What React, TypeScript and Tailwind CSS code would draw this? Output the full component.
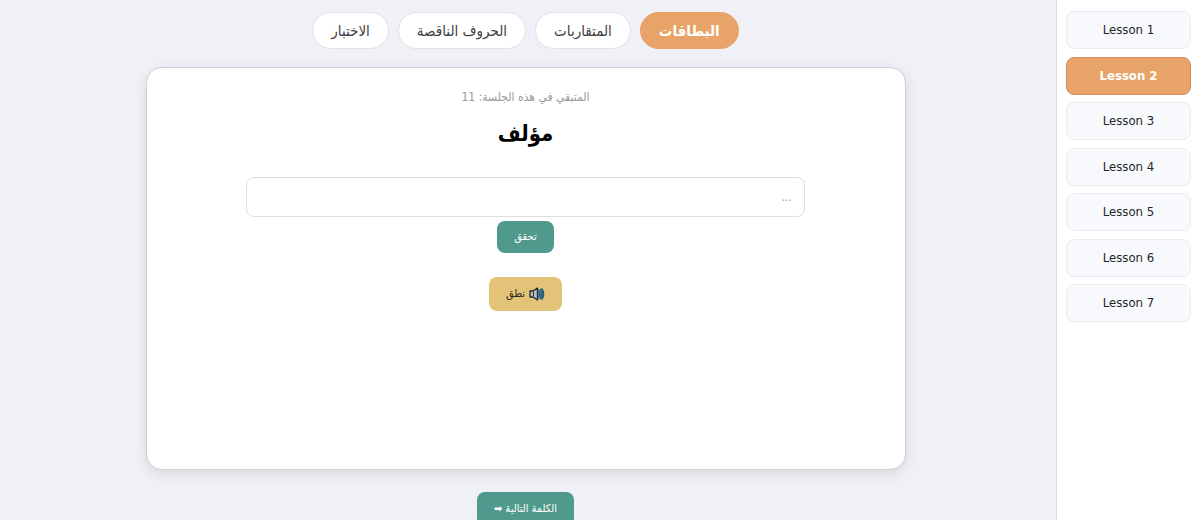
import { useState } from 'react';
import { cva } from 'class-variance-authority';

const tabs = ['البطاقات', 'المتقاربات', 'الحروف الناقصة', 'الاختبار'];
const lessons = [1, 2, 3, 4, 5, 6, 7];

const tabButton = cva('h-[37px] rounded-full border px-[18px] text-[15px] leading-5', {
  variants: {
    active: {
      true: 'border-[#e8a468] bg-[#e8a468] font-bold text-white',
      false: 'border-[#e0e1e6] bg-white text-[#3f4045]',
    },
  },
});

const lessonButton = cva('h-[38px] w-full rounded-lg border text-[13px] leading-5', {
  variants: {
    active: {
      true: 'border-[#d68a62] bg-[#e8a468] font-bold text-white',
      false: 'border-[#eaecf0] bg-[#f8f9fc] text-[#25262b]',
    },
  },
});

function SpeakerIcon() {
  return (
    <svg viewBox="0 0 16 14" className="h-3.5 w-4" aria-hidden="true">
      <path d="M1 4h3L8.500 1v12L4 10H1z" fill="#b9bec2" stroke="#22282c" strokeWidth="1.3" strokeLinejoin="round" />
      <path d="M4.500 4.500v5" stroke="#22282c" strokeWidth="1" />
      <path d="M9 2.500l3-1c4 2 4 9 0 11l-3-1z" fill="#4b8ba0" />
      <path d="M10 4.500q1.800 2.500 0 5M11.500 2.500q3 4.500 0 9M13 1.500q3.600 5.500 0 11" fill="none" stroke="#22515f" strokeWidth="1.100" strokeLinecap="round" />
    </svg>
  );
}

export default function App() {
  const [tab, setTab] = useState(0);
  const [lesson, setLesson] = useState(2);
  const [answer, setAnswer] = useState('');

  return (
    <div
      dir="rtl"
      className="flex h-screen overflow-hidden bg-[#f0f1f6] font-['DejaVu_Sans_Condensed','DejaVu_Sans',sans-serif]"
    >
      <aside dir="ltr" className="w-36 shrink-0 border-l border-[#dcdde2] bg-white px-[9px] pt-[11px]">
        <nav className="flex min-h-[311px] flex-col justify-between">
          {lessons.map((n) => (
            <button key={n} onClick={() => setLesson(n)} className={lessonButton({ active: n === lesson })}>
              Lesson {n}
            </button>
          ))}
        </nav>
      </aside>

      <main className="flex grow flex-col items-center ps-[5px] pt-3">
        <div className="flex gap-[9px]">
          {tabs.map((label, i) => (
            <button key={label} onClick={() => setTab(i)} className={tabButton({ active: i === tab })}>
              {label}
            </button>
          ))}
        </div>

        <section className="mt-[18px] flex min-h-[403px] w-full max-w-[760px] shrink-0 flex-col items-center rounded-2xl border border-[#cfd0d4] bg-white px-[30px] pt-[19px] shadow-[0_4px_14px_rgba(0,0,0,0.1)]">
          <p className="text-xs leading-5 text-[#999]">المتبقي في هذه الجلسة: 11</p>
          <h1 className="mt-[9px] text-[22px] leading-9 font-bold text-black">مؤلف</h1>
          <input
            type="text"
            aria-label="الإجابة"
            placeholder="..."
            value={answer}
            onChange={(e) => setAnswer(e.target.value)}
            className="mt-[25px] h-10 w-4/5 rounded-lg border border-[#dedede] px-3 text-xs placeholder:text-[#999]"
          />
          <button className="mt-1 h-8 rounded-lg bg-[#4f9a8c] px-[17px] text-[11px] text-white">تحقق</button>
          <button className="mt-6 flex h-[34px] items-center gap-1 rounded-lg bg-[#e2c377] px-[17px] text-[11px] text-[#2c2a24]">
            <SpeakerIcon />
            نطق
          </button>
        </section>

        <button className="mt-[22px] h-[34px] shrink-0 rounded-lg bg-[#4f9a8c] px-[17px] text-[11px] text-white">
          الكلمة التالية ➡
        </button>
      </main>
    </div>
  );
}
